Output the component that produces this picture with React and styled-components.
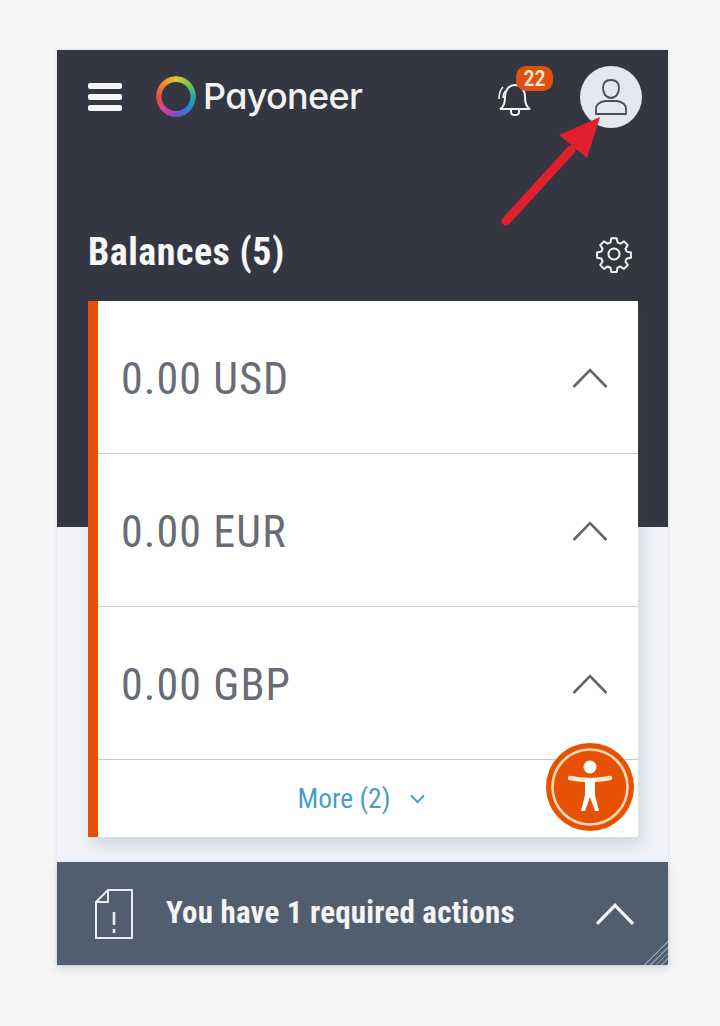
import React from 'react';
import styled, { createGlobalStyle } from 'styled-components';

const GlobalStyle = createGlobalStyle`
  html, body {
    margin: 0;
    height: 100%;
    background: #f6f6f8;
    font-family: Roboto, "Liberation Sans", sans-serif;
  }
`;

const Page = styled.div`
  position: relative;
  width: 720px;
  height: 1026px;
  padding: 50px 52px 0 57px;
  box-sizing: border-box;
  overflow: hidden;
`;

const Frame = styled.div`
  width: 611px;
  background: #f0f2f8;
  box-shadow: 0 0 3px rgba(60, 64, 80, 0.15);
`;

const Header = styled.header`
  height: 477px;
  padding: 16px 35px 0 31px;
  box-sizing: border-box;
  background: #343741;
`;

const TopBar = styled.div`
  display: flex;
  align-items: center;
  height: 62px;
`;

const Burger = styled.div`
  display: flex;
  flex-direction: column;
  justify-content: space-between;
  width: 34px;
  height: 28px;

  span {
    height: 6px;
    border-radius: 2px;
    background: #f6f6f6;
  }
`;

const Logo = styled.div`
  display: flex;
  align-items: center;
  margin-left: 34px;
  margin-top: -2px;
`;

const LogoRing = styled.div`
  width: 40px;
  height: 41px;
  border-radius: 50%;
  background: conic-gradient(from 0deg, #d9c92e, #7ac943, #27a9a0, #2d7fd6, #7b4fc9, #d93fa0, #e2503a, #ee8a2c, #d9c92e);
  -webkit-mask: radial-gradient(circle, transparent 14px, #000 15px);
  mask: radial-gradient(circle, transparent 14px, #000 15px);
`;

const LogoText = styled.span`
  margin-left: 7px;
  font-family: Inter, sans-serif;
  font-size: 36px;
  font-weight: 500;
  font-feature-settings: "cv11";
  letter-spacing: -0.7px;
  color: #f2f2f2;
`;

const TopActions = styled.div`
  display: flex;
  align-items: center;
  margin-left: auto;
`;

const BellWrap = styled.div`
  position: relative;
  width: 36px;
  height: 38px;
  margin-top: 8px;
`;

const Badge = styled.span`
  position: absolute;
  top: -16px;
  left: 19px;
  width: 37px;
  height: 25px;
  border-radius: 10px;
  background: #dd5212;
  color: #ffe9c8;
  font-size: 22px;
  font-weight: 500;
  font-stretch: 75%;
  line-height: 25px;
  text-align: center;
`;

const Avatar = styled.div`
  display: flex;
  align-items: center;
  justify-content: center;
  width: 62px;
  height: 62px;
  margin-left: 47px;
  margin-right: -9px;
  border-radius: 50%;
  background: #e4e7ee;
`;

const BalanceBar = styled.div`
  display: flex;
  align-items: center;
  justify-content: space-between;
  margin-top: 106px;
  height: 36px;
`;

const BalanceTitle = styled.h2`
  margin: 0;
  font-size: 38px;
  font-weight: 700;
  font-stretch: 75%;
  letter-spacing: 0.5px;
  color: #f7f7f7;
`;

const GearSlot = styled.div`
  display: flex;
  margin-top: 4px;
`;

const Body = styled.div`
  padding: 0 30px 25px 31px;
  margin-top: -226px;
`;

const Card = styled.section`
  position: relative;
  border-left: 10px solid #ea5005;
  background: #fff;
  box-shadow: 4px 8px 14px rgba(70, 75, 95, 0.16);
`;

const Row = styled.div`
  display: flex;
  align-items: center;
  justify-content: space-between;
  height: 152px;
  padding: 0 30px 0 23px;
  border-bottom: 1px solid #c9c9cd;
`;

const Amount = styled.span`
  margin-top: 3px;
  font-size: 44px;
  font-stretch: 75%;
  letter-spacing: 1.1px;
  color: #686c74;
`;

const RowChevron = styled.div`
  display: flex;
  margin-top: 2px;
`;

const More = styled.div`
  display: flex;
  align-items: center;
  justify-content: center;
  gap: 20px;
  height: 77px;
  padding-right: 13px;
  font-size: 27.5px;
  font-stretch: 75%;
  color: #4a9cc9;
`;

const A11yButton = styled.div`
  position: absolute;
  right: 4px;
  bottom: 6px;
  display: flex;
  align-items: center;
  justify-content: center;
  width: 88px;
  height: 88px;
  border-radius: 50%;
  background: #e75106;
`;

const ActionBar = styled.footer`
  position: relative;
  display: flex;
  align-items: center;
  height: 103px;
  padding: 0 33px 0 38px;
  box-sizing: border-box;
  background: #505e70;
  box-shadow: 0 4px 8px rgba(60, 64, 80, 0.15);
  overflow: hidden;
`;

const ActionText = styled.span`
  margin-left: 33px;
  margin-bottom: 2px;
  font-size: 31px;
  font-weight: 700;
  font-stretch: 75%;
  letter-spacing: 0.2px;
  color: #f3f4f6;
`;

const ActionChevron = styled.div`
  display: flex;
  margin-left: auto;
`;

const Stripes = styled.div`
  position: absolute;
  right: 0;
  bottom: 0;
  width: 26px;
  height: 26px;
  background: repeating-linear-gradient(-45deg, #8d98a6 0 1px, transparent 1px 4px);
  clip-path: polygon(100% 0, 100% 100%, 0 100%);
`;

const Arrow = styled.svg`
  position: absolute;
  left: 495px;
  top: 108px;
`;

const Chevron = ({ color = '#62666e', width = 36, height = 22, stroke = 2.6 }) => (
  <svg width={width} height={height} viewBox="0 0 36 22" fill="none">
    <path d="M1.5 20 18 3 34.5 20" stroke={color} strokeWidth={stroke} />
  </svg>
);

const BellIcon = () => (
  <svg width="36" height="38" viewBox="0 0 36 38" fill="none" stroke="#f4f4f4" strokeWidth="2">
    <path d="M3 27c4-2 5-6 5-12 0-7 4-12 10-12s10 5 10 12c0 6 1 10 5 12z" />
    <path d="M14 27v3c0 2 1 3 4 3s4-1 4-3v-3" />
    <path d="M2 17c0-5 1-9 4-12M6 16c0-3 1-5 2-7" strokeWidth="1.6" />
  </svg>
);

const UserIcon = () => (
  <svg width="34" height="38" viewBox="0 0 34 38" fill="none" stroke="#4a4e58" strokeWidth="1.8">
    <path d="M17 2c-5 0-8 3-8 8s3 10 8 10 8-5 8-10-3-8-8-8z" />
    <path d="M2 36v-5c0-5 4-7 9-8h12c5 1 9 3 9 8v5z" />
  </svg>
);

const GearIcon = () => (
  <svg width="38" height="38" viewBox="0 0 24 24" fill="none" stroke="#f4f4f4" strokeWidth="1.25" strokeLinejoin="round">
    <path d="M10.3 2h3.400l.5 2.700 1.800.8 2.300-1.500 2.400 2.400-1.500 2.300.8 1.800 2.700.5v3.400l-2.700.5-.8 1.800 1.500 2.300-2.400 2.400-2.300-1.500-1.800.8-.5 2.700h-3.400l-.5-2.700-1.800-.8-2.300 1.500-2.400-2.400 1.500-2.300-.8-1.800-2.700-.5v-3.400l2.700-.5.8-1.800-1.500-2.300 2.400-2.400 2.300 1.500 1.800-.8z" />
    <circle cx="12" cy="12" r="3.500" />
  </svg>
);

const DocIcon = () => (
  <svg width="38" height="50" viewBox="0 0 38 50" fill="none" stroke="#e8ebef" strokeWidth="2">
    <path d="M13 1h24v48H1V13z" />
    <path d="M13 1v12H1" />
    <path d="M19 23v13M19 40v4" strokeWidth="2.6" />
  </svg>
);

const PersonIcon = () => (
  <svg width="80" height="80" viewBox="0 0 80 80" fill="none">
    <circle cx="40" cy="40" r="37.500" stroke="#fdd9b0" strokeWidth="2.6" />
    <circle cx="40" cy="20" r="6.500" fill="#fff" />
    <path d="M20 31c7 1.500 13 2 20 2s13-.5 20-2" stroke="#fde8cf" strokeWidth="4.500" strokeLinecap="round" />
    <path d="M35 32h10v16l4 16h-4l-5-14-5 14h-4l4-16z" fill="#fff" />
  </svg>
);

const balances = ['0.00 USD', '0.00 EUR', '0.00 GBP'];

const App = () => (
  <Page>
    <GlobalStyle />
    <Frame>
      <Header>
        <TopBar>
          <Burger><span /><span /><span /></Burger>
          <Logo>
            <LogoRing />
            <LogoText>Payoneer</LogoText>
          </Logo>
          <TopActions>
            <BellWrap>
              <BellIcon />
              <Badge>22</Badge>
            </BellWrap>
            <Avatar><UserIcon /></Avatar>
          </TopActions>
        </TopBar>
        <BalanceBar>
          <BalanceTitle>Balances (5)</BalanceTitle>
          <GearSlot><GearIcon /></GearSlot>
        </BalanceBar>
      </Header>
      <Body>
        <Card>
          {balances.map((b) => (
            <Row key={b}>
              <Amount>{b}</Amount>
              <RowChevron><Chevron /></RowChevron>
            </Row>
          ))}
          <More>
            <span>More (2)</span>
            <svg width="15" height="10" viewBox="0 0 15 10" fill="none">
              <path d="M1 1.500 7.500 8 14 1.500" stroke="#4a9cc9" strokeWidth="2" />
            </svg>
          </More>
          <A11yButton><PersonIcon /></A11yButton>
        </Card>
      </Body>
      <ActionBar>
        <DocIcon />
        <ActionText>You have 1 required actions</ActionText>
        <ActionChevron><Chevron color="#f3f4f6" width={40} height={24} stroke={3} /></ActionChevron>
        <Stripes />
      </ActionBar>
    </Frame>
    <Arrow width="120" height="125" viewBox="0 0 120 125" fill="none">
      <path d="M11 113 76 42" stroke="#e0202e" strokeWidth="9" strokeLinecap="round" />
      <path d="M105 9 64 27 92 50z" fill="#e0202e" />
    </Arrow>
  </Page>
);

export default App;
